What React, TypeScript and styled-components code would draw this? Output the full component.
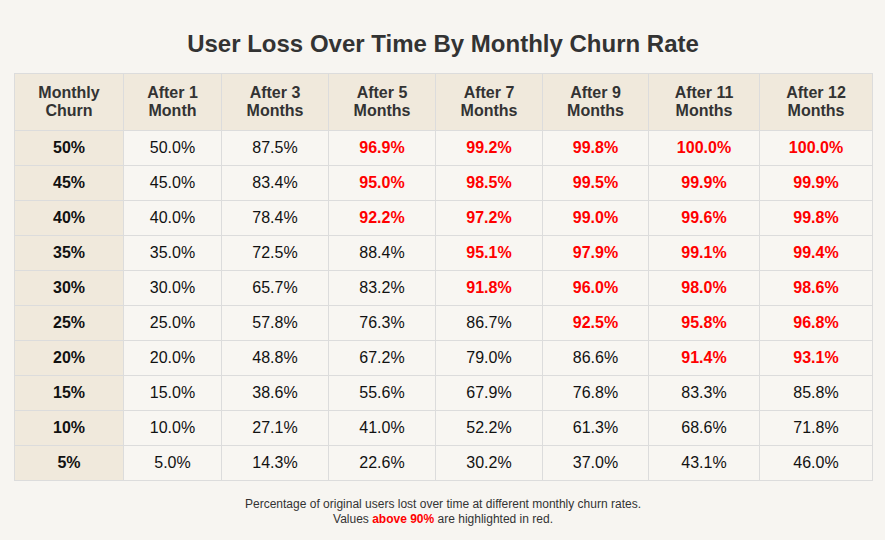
import React from "react";
import styled, { createGlobalStyle } from "styled-components";

const Global = createGlobalStyle`
  html, body { margin: 0; padding: 0; background: #f7f5f1; }
  body { font-family: "Liberation Sans", Arial, sans-serif; }
`;

const Page = styled.div`
  width: 885px;
  height: 540px;
  box-sizing: border-box;
  padding: 30px 13px 0 14px;
  background: #f7f5f1;
`;

const Title = styled.h1`
  margin: 0 0 15px;
  text-align: center;
  font-size: 24px;
  line-height: 28px;
  font-weight: 700;
  color: #333;
`;

const Table = styled.table`
  width: 858px;
  border-collapse: collapse;
  table-layout: fixed;
`;

const Th = styled.th`
  background: #f0e9dc;
  border: 1px solid #dcdcdc;
  color: #333;
  font-size: 16px;
  line-height: 18px;
  font-weight: 700;
  padding: 10px 6px;
  text-align: center;
  height: 57px;
  box-sizing: border-box;
`;

const Td = styled.td<{ $first?: boolean; $high?: boolean }>`
  background: ${(p) => (p.$first ? "#f0e9dc" : "#f8f6f2")};
  border: 1px solid #dcdcdc;
  font-size: 16px;
  line-height: 18px;
  height: 35px;
  box-sizing: border-box;
  padding: 0 6px;
  text-align: center;
  color: ${(p) => (p.$high ? "#ff0000" : "#111")};
  font-weight: ${(p) => (p.$first || p.$high ? 700 : 400)};
`;

const Footer = styled.div`
  margin-top: 16px;
  text-align: center;
  font-size: 12px;
  line-height: 15px;
  color: #333;
`;

const Red = styled.span`
  color: #ff0000;
  font-weight: 700;
`;

const widths = [109, 98, 107, 107, 107, 106, 111, 113];
const headers = [
  ["Monthly", "Churn"],
  ["After 1", "Month"],
  ["After 3", "Months"],
  ["After 5", "Months"],
  ["After 7", "Months"],
  ["After 9", "Months"],
  ["After 11", "Months"],
  ["After 12", "Months"],
];
const months = [1, 3, 5, 7, 9, 11, 12];
const rates = [50, 45, 40, 35, 30, 25, 20, 15, 10, 5];

export default function App() {
  return (
    <Page>
      <Global />
      <Title>User Loss Over Time By Monthly Churn Rate</Title>
      <Table>
        <colgroup>
          {widths.map((w, i) => (
            <col key={i} style={{ width: w }} />
          ))}
        </colgroup>
        <thead>
          <tr>
            {headers.map((h, i) => (
              <Th key={i}>
                {h[0]}
                <br />
                {h[1]}
              </Th>
            ))}
          </tr>
        </thead>
        <tbody>
          {rates.map((r) => (
            <tr key={r}>
              <Td $first>{r}%</Td>
              {months.map((m) => {
                const v = (1 - Math.pow(1 - r / 100, m)) * 100;
                return (
                  <Td key={m} $high={v > 90}>
                    {v.toFixed(1)}%
                  </Td>
                );
              })}
            </tr>
          ))}
        </tbody>
      </Table>
      <Footer>
        Percentage of original users lost over time at different monthly churn rates.
        <br />
        Values <Red>above 90%</Red> are highlighted in red.
      </Footer>
    </Page>
  );
}
